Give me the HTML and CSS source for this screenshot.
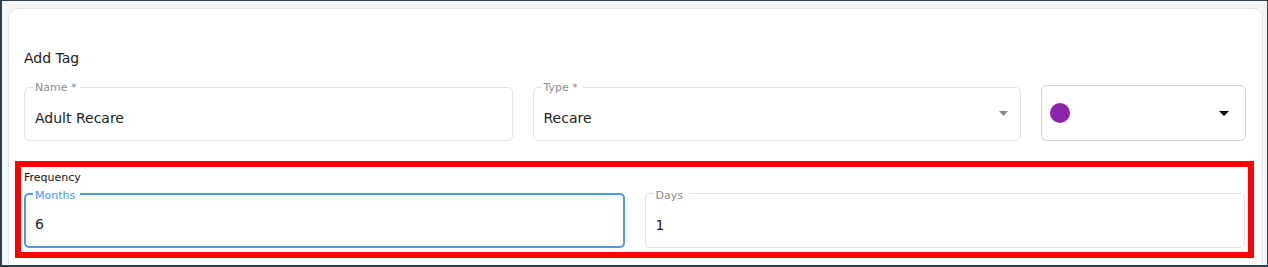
FILE: index.html
```html
<!DOCTYPE html>
<html lang="en">

<head>
    <meta charset="UTF-8">
    <meta name="viewport" content="width=device-width, initial-scale=1.0">
    <title>Add Tag</title>
    <link rel="stylesheet" href="styles.css">
</head>

<body>
    <div class="frame">
        <div class="card">
            <h2 class="title">Add Tag</h2>

            <div class="tag-row">
                <div class="field">
                    <span class="field-label">Name *</span>
                    <div class="field-value">Adult Recare</div>
                </div>

                <div class="field field-select">
                    <span class="field-label">Type *</span>
                    <div class="field-value">Recare</div>
                    <svg class="arrow" width="9" height="5" viewBox="0 0 9 5">
                        <polygon points="0,0 9,0 4.5,5" fill="#8a8a8a" />
                    </svg>
                </div>

                <div class="color-picker">
                    <span class="swatch"></span>
                    <svg class="arrow" width="10" height="5" viewBox="0 0 10 5">
                        <polygon points="0,0 10,0 5,5" fill="#000000" />
                    </svg>
                </div>
            </div>

            <div class="frequency">
                <div class="frequency-title">Frequency</div>
                <div class="frequency-row">
                    <div class="field field-focused">
                        <span class="field-label">Months</span>
                        <div class="field-value">6</div>
                    </div>
                    <div class="field field-wide">
                        <span class="field-label">Days</span>
                        <div class="field-value">1</div>
                    </div>
                </div>
            </div>
        </div>
    </div>
</body>

</html>
```

FILE: styles.css
```css
body {
    margin: 0;
    font-family: 'DejaVu Sans', Verdana, sans-serif;
    color: #222222;
}

.frame {
    height: 267px;
    box-sizing: border-box;
    border: 1px solid #2d3e4e;
    border-left-width: 2px;
    border-bottom-width: 2px;
    background-color: #f5f5f5;
    padding: 7px 4px 0 6px;
    overflow: hidden;
}

.card {
    background-color: #ffffff;
    border: 1px solid #e6e6e6;
    border-radius: 10px;
    padding: 41px 16px 30px 15px;
}

.title {
    margin: 0 0 19px;
    font-size: 14px;
    font-weight: normal;
    line-height: 16px;
    color: #1a1a1a;
}

.tag-row {
    display: grid;
    grid-template-columns: 1fr 1fr 205px;
    gap: 20px;
    align-items: end;
}

.field {
    position: relative;
    height: 54px;
    box-sizing: border-box;
    border: 1px solid #e2e2e2;
    border-radius: 5px;
    padding: 22px 10px 0;
    background-color: #ffffff;
}

.field-label {
    position: absolute;
    top: -7px;
    left: 8px;
    padding: 0 5px 0 2px;
    background-color: #ffffff;
    font-size: 11px;
    line-height: 13px;
    color: #8c8c8c;
}

.field-value {
    font-size: 14px;
    line-height: 16px;
    color: #222222;
}

.field-select .arrow {
    position: absolute;
    right: 12px;
    top: 23px;
}

.color-picker {
    height: 56px;
    box-sizing: border-box;
    border: 1px solid #d2d2d2;
    border-radius: 6px;
    padding: 0 16px 0 8px;
    display: flex;
    align-items: center;
    justify-content: space-between;
}

.swatch {
    width: 20px;
    height: 20px;
    border-radius: 50%;
    background-color: #8e24aa;
}

.frequency {
    margin: 20px -8px 0 -9px;
    border: 6px solid #ff0000;
    padding: 4px 3px 4px;
}

.frequency-title {
    font-size: 11px;
    line-height: 13px;
    color: #111111;
    margin-bottom: 9px;
}

.frequency-row {
    display: grid;
    grid-template-columns: 1fr 1fr;
    gap: 20px;
}

.frequency-row .field {
    height: 55px;
    padding-top: 23px;
}

.frequency-row .field-label {
    top: -5px;
}

.field-focused {
    border: 2px solid #4a9aec;
}

.frequency-row .field-focused {
    padding: 21px 9px 0;
}

.field-focused .field-label {
    left: 7px;
    top: -6px;
    color: #3f94e9;
}
```
